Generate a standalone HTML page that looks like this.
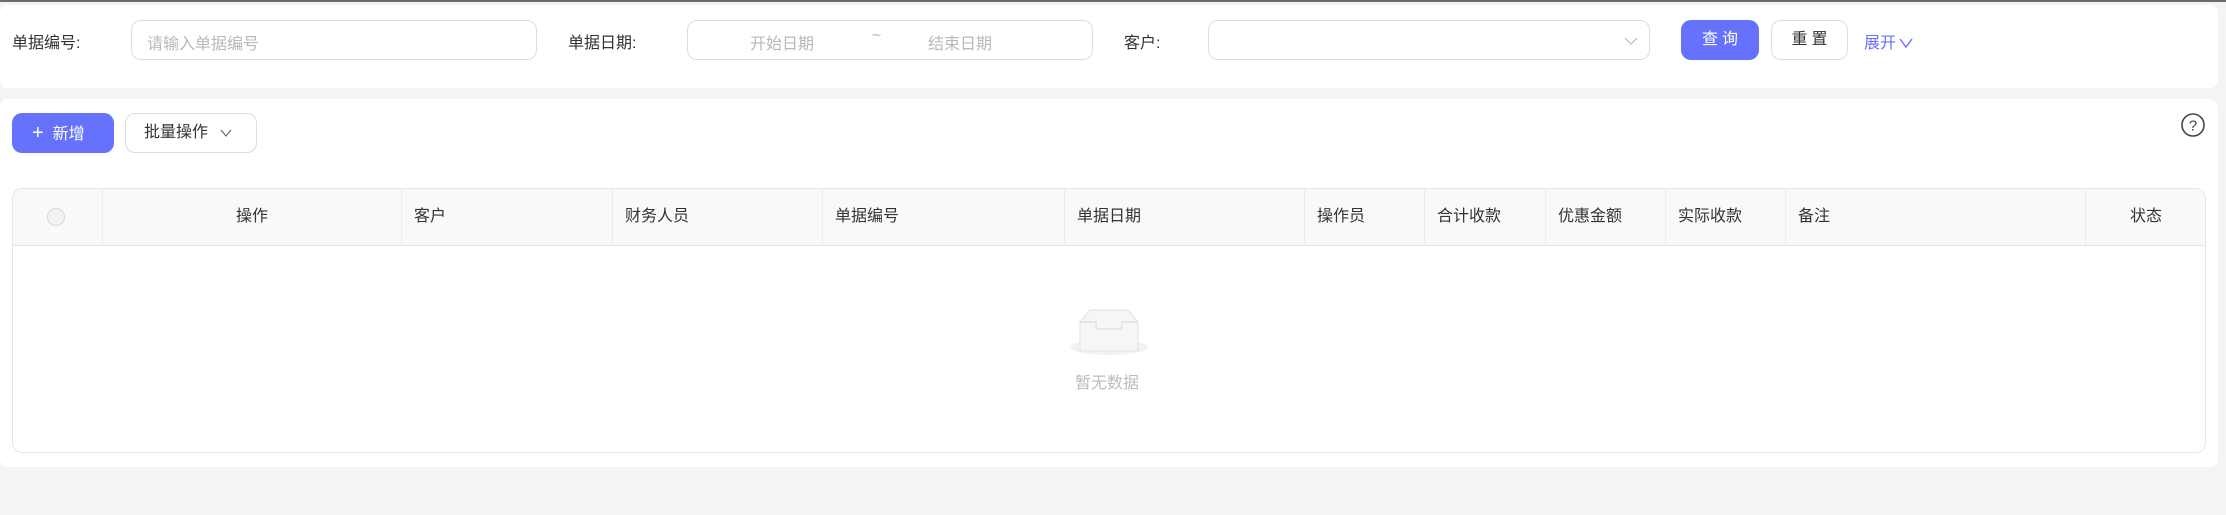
<!DOCTYPE html>
<html><head><meta charset="utf-8"><style>
*{box-sizing:border-box;margin:0;padding:0}
body{width:2226px;height:515px;background:#f5f4f2;font-family:"Liberation Sans","Noto Sans CJK SC",sans-serif;font-size:16px;color:#333;position:relative;overflow:hidden}
.abs{position:absolute}
.panel{background:#fff;border-radius:8px}
.inp{border:1px solid #dcdcdc;border-radius:10px;background:#fff;height:40px;top:20px}
.ph{color:#b8b8b8;font-size:16px}
.lbl{top:29px;font-size:16px;color:#333}
.th{top:188px;height:58px;line-height:58px;font-size:16px;color:#333;border-right:1px solid #ececec}
</style></head><body>
<div class="abs" style="left:0;top:0;width:2226px;height:2px;background:#6b6b6b"></div>
<div class="abs panel" style="left:0;top:5px;width:2218px;height:83px"></div>
<div class="abs lbl" style="left:12px">单据编号:</div>
<div class="abs inp" style="left:131px;width:406px"><span class="abs ph" style="left:15px;top:9px">请输入单据编号</span></div>
<div class="abs lbl" style="left:568px">单据日期:</div>
<div class="abs inp" style="left:687px;width:406px"><span class="abs ph" style="left:62px;top:9px">开始日期</span><span class="abs ph" style="left:183px;top:7px;font-family:'DejaVu Sans',sans-serif;font-size:13px">~</span><span class="abs ph" style="left:240px;top:9px">结束日期</span></div>
<div class="abs lbl" style="left:1124px">客户:</div>
<div class="abs inp" style="left:1208px;width:442px"><svg class="abs" style="left:415px;top:15px" width="14" height="10"><path d="M1 2 L7 8 L13 2" fill="none" stroke="#bbb" stroke-width="1.2"/></svg></div>
<div class="abs" style="left:1681px;top:20px;width:78px;height:40px;border-radius:10px;background:#6672fb;color:#fff;text-align:center;line-height:40px;letter-spacing:4px;padding-left:4px">查询</div>
<div class="abs" style="left:1771px;top:20px;width:77px;height:40px;border-radius:10px;border:1px solid #dcdcdc;background:#fff;text-align:center;line-height:38px;letter-spacing:4px;padding-left:4px">重置</div>
<div class="abs" style="left:1864px;top:29px;color:#6672fb">展开<svg style="margin-left:3px" width="14" height="10"><path d="M1 1 L7 9 L13 1" fill="none" stroke="#6672fb" stroke-width="1.4"/></svg></div>

<div class="abs panel" style="left:0;top:99px;width:2218px;height:368px"></div>
<div class="abs" style="left:12px;top:113px;width:102px;height:40px;border-radius:10px;background:#6672fb;color:#fff;line-height:40px;padding-left:20px"><span style="font-size:20px;font-weight:300">+</span>&nbsp;&nbsp;新增</div>
<div class="abs" style="left:125px;top:113px;width:132px;height:40px;border-radius:10px;border:1px solid #dcdcdc;background:#fff;line-height:38px;padding-left:18px">批量操作<svg style="margin-left:12px" width="12" height="8"><path d="M1 1 L6 7 L11 1" fill="none" stroke="#666" stroke-width="1.2"/></svg></div>
<svg class="abs" style="left:2180px;top:112px" width="26" height="26"><circle cx="13" cy="13" r="11" fill="none" stroke="#444" stroke-width="1.6"/><text x="13" y="18.5" text-anchor="middle" font-size="15" fill="#444" font-family="Liberation Sans">?</text></svg>

<div class="abs" style="left:12px;top:188px;width:2194px;height:265px;border:1px solid #e6e6e6;border-radius:10px;overflow:hidden">
<div style="height:57px;background:#f9f9f9;border-bottom:1px solid #e4e4e4"></div>
</div>
<div class="abs" style="left:47px;top:208px;width:18px;height:18px;border-radius:50%;border:1px solid #d8d8d8;background:#f3f3f3"></div>
<div class="abs th" style="left:12px;width:91px"></div>
<div class="abs th" style="left:103px;width:299px;text-align:center">操作</div>
<div class="abs th" style="left:402px;width:211px;padding-left:12px">客户</div>
<div class="abs th" style="left:613px;width:210px;padding-left:12px">财务人员</div>
<div class="abs th" style="left:823px;width:242px;padding-left:12px">单据编号</div>
<div class="abs th" style="left:1065px;width:240px;padding-left:12px">单据日期</div>
<div class="abs th" style="left:1305px;width:120px;padding-left:12px">操作员</div>
<div class="abs th" style="left:1425px;width:121px;padding-left:12px">合计收款</div>
<div class="abs th" style="left:1546px;width:120px;padding-left:12px">优惠金额</div>
<div class="abs th" style="left:1666px;width:120px;padding-left:12px">实际收款</div>
<div class="abs th" style="left:1786px;width:300px;padding-left:12px">备注</div>
<div class="abs th" style="left:2086px;width:120px;text-align:center;border-right:none">状态</div>

<svg class="abs" style="left:1068px;top:305px" width="82" height="52"><ellipse cx="41" cy="42" rx="39" ry="8" fill="#f2f2f2"/><path d="M12 17 L22 5 H60 L70 17 V43 Q70 46 67 46 H15 Q12 46 12 43 Z" fill="#f6f6f6" stroke="#e2e2e2" stroke-width="1"/><path d="M12 17 H28 V21 Q28 24 31 24 H51 Q54 24 54 21 V17 H70" fill="none" stroke="#dcdcdc" stroke-width="1.2"/></svg>
<div class="abs" style="left:1075px;top:369px;color:#bbb;font-size:16px">暂无数据</div>
</body></html>
